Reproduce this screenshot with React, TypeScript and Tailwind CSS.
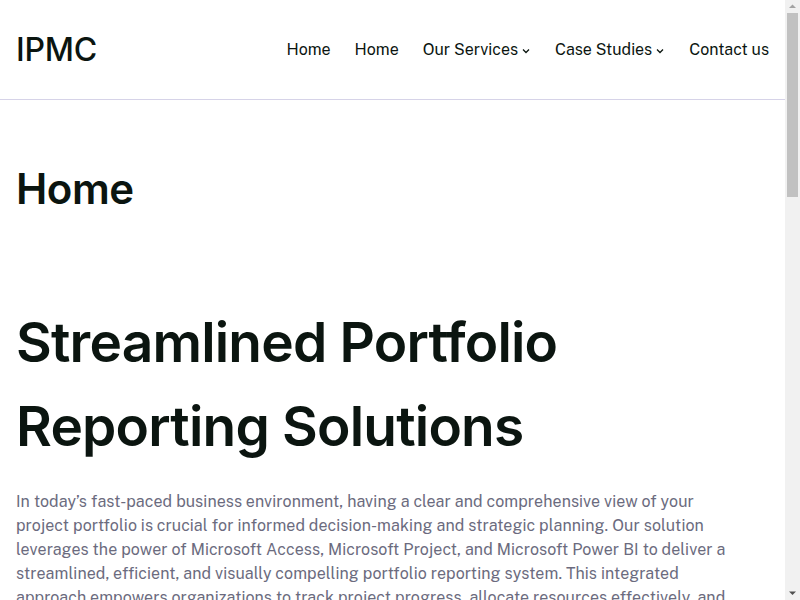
import React from "react";

const Chevron = () => (
  <svg width="10" height="10" viewBox="0 0 10 10" className="ml-[3px] mt-[3px]" fill="none">
    <path d="M2 3.5 L5 6.5 L8 3.5" stroke="#0b1510" strokeWidth="1.3" />
  </svg>
);

const Scrollbar = () => (
  <div className="w-[15px] h-full bg-[#f1f1f1] flex flex-col items-center shrink-0">
    <svg width="15" height="13" viewBox="0 0 15 13" className="shrink-0">
      <path d="M4 8 L7.5 4.5 L11 8 Z" fill="#a3a3a3" />
    </svg>
    <div className="w-[11px] h-[184px] bg-[#c1c1c1]" />
    <div className="flex-1" />
    <svg width="15" height="13" viewBox="0 0 15 13" className="shrink-0">
      <path d="M4 4.5 L7.5 8 L11 4.5 Z" fill="#505050" />
    </svg>
  </div>
);

export default function App() {
  const heading = { fontFamily: "Inter, 'Noto Sans', sans-serif" } as React.CSSProperties;
  const body = { fontFamily: "'Public Sans', Inter, 'Noto Sans', sans-serif" } as React.CSSProperties;
  const para = "mt-[20px] max-w-[720px] text-[16px] leading-[24px] tracking-[0.08px] text-[#6b6b7e]";
  return (
    <div className="h-screen w-full flex overflow-hidden bg-white text-[#0b1510]" style={body}>
      <div className="flex-1 min-w-0 h-full overflow-hidden">
        <header className="h-[100px] border-b border-[#d6d3e8] flex items-center justify-between pl-[16px] pr-[16px]">
          <div className="text-[32px] font-medium tracking-[-0.2px] text-[#0b1510]" style={heading}>IPMC</div>
          <nav className="flex items-center gap-[24px] text-[16px] text-[#0b1510]">
            <a>Home</a>
            <a>Home</a>
            <a className="flex items-center">Our Services<Chevron /></a>
            <a className="flex items-center">Case Studies<Chevron /></a>
            <a>Contact us</a>
          </nav>
        </header>
        <main className="px-[16px]">
          <h1 className="mt-[63px] text-[42px] leading-[52px] font-semibold tracking-[-0.5px]" style={heading}>Home</h1>
          <h2 className="mt-[85px] text-[55px] leading-[84px] font-semibold tracking-[-0.8px]" style={heading}>
            Streamlined Portfolio<br />Reporting Solutions
          </h2>
          <p className="mt-[22px] max-w-[720px] text-[16px] leading-[24px] tracking-[0.08px] text-[#6b6b7e]">
            In today’s fast-paced business environment, having a clear and comprehensive view of your project portfolio is crucial for informed decision-making and strategic planning. Our solution leverages the power of Microsoft Access, Microsoft Project, and Microsoft Power BI to deliver a streamlined, efficient, and visually compelling portfolio reporting system. This integrated approach empowers organizations to track project progress, allocate resources effectively, and make data-driven decisions with confidence.
          </p>
          <h3 className="mt-[60px] text-[36px] leading-[54px] font-semibold" style={heading}>Key Features</h3>
          <p className={para}>
            Centralized data management with Microsoft Access provides a single source of truth for all project information. Detailed scheduling and task tracking with Microsoft Project keeps every initiative on course, while Microsoft Power BI turns that data into interactive dashboards and reports.
          </p>
          <h3 className="mt-[60px] text-[36px] leading-[54px] font-semibold" style={heading}>Benefits</h3>
          <p className={para}>
            Improved visibility across the portfolio, faster reporting cycles, better resource allocation and stronger alignment between projects and organizational strategy.
          </p>
        </main>
      </div>
      <Scrollbar />
    </div>
  );
}
